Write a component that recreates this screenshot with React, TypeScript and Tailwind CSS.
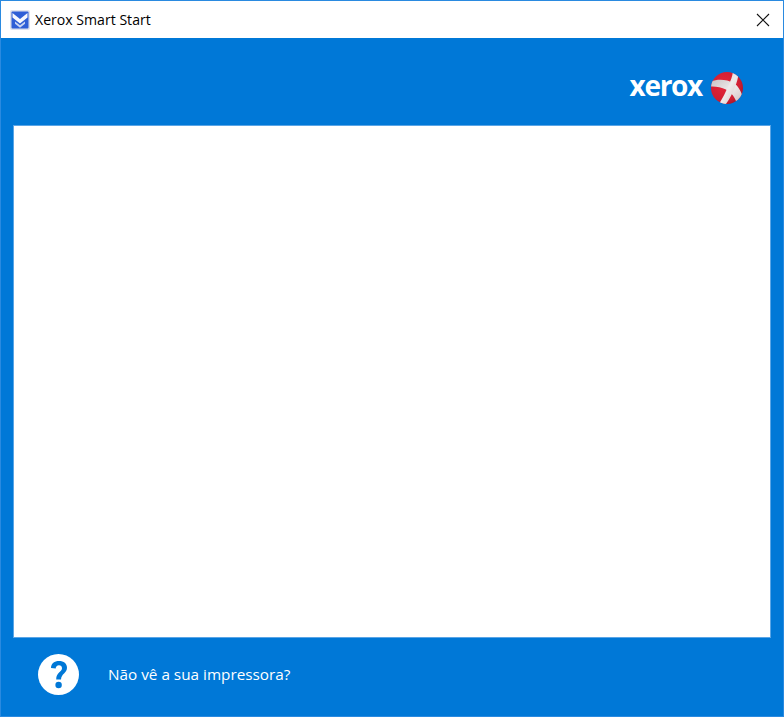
export default function App() {
  return (
    <div className="flex h-[717px] w-[784px] flex-col border border-[#2a8ae0] bg-[#0078d7] font-['Open_Sans',sans-serif]">
      <header className="flex h-[37px] items-center bg-white pl-[9px] pr-[13px]">
        <svg width="20" height="20" viewBox="0 0 20 20" className="shrink-0">
          <rect x="0" y="0" width="20" height="20" rx="2" fill="#dde1ec" />
          <rect x="1.5" y="1.5" width="17" height="17" rx="1" fill="#2f5fd6" />
          <path d="M2.5 3 L10 9 L17.5 3 L17.5 7.5 L10 13.5 L2.5 7.5 Z" fill="#f6f8fd" />
          <path d="M5 11.5 L10 15.2 L15 11.5 L15 13.7 L10 17.8 L5 13.7 Z" fill="#c9d5f2" />
        </svg>
        <span className="ml-[5px] mt-[1px] text-[14.1px] leading-none text-black">Xerox Smart Start</span>
        <svg width="14" height="14" viewBox="0 0 14 14" className="ml-auto" fill="none" stroke="#111" strokeWidth="1.1">
          <path d="M1 1 L13 13 M13 1 L1 13" />
        </svg>
      </header>
      <div className="flex h-[87px] items-start justify-end pr-[39px] pt-[33px]">
        <span className="mt-[-2px] text-[28px] font-bold leading-[32px] tracking-[-1.3px] text-white">xerox</span>
        <svg width="34" height="34" viewBox="0 0 34 34" className="ml-[8px] shrink-0">
          <defs>
            <radialGradient id="ball" cx="0.4" cy="0.4" r="0.7">
              <stop offset="0" stopColor="#e62638" />
              <stop offset="0.7" stopColor="#d01e32" />
              <stop offset="1" stopColor="#a01226" />
            </radialGradient>
            <linearGradient id="band" x1="0" y1="0" x2="1" y2="1">
              <stop offset="0" stopColor="#c8c2c2" />
              <stop offset="0.5" stopColor="#eeeaea" />
              <stop offset="1" stopColor="#d0bcbc" />
            </linearGradient>
            <clipPath id="ballClip"><circle cx="17" cy="17" r="16" /></clipPath>
          </defs>
          <circle cx="17" cy="17" r="16" fill="url(#ball)" />
          <g clipPath="url(#ballClip)">
            <path d="M0 11 C7 7.5 16 8 24 12 C29 16 32 22 33 28 L27 33 C25.5 27 22 22 16 18.5 C11 16 5 15 0 15.5 Z" fill="url(#band)" />
            <path d="M23 0 C22.5 5 21 9 18.5 14 C16 21 12.5 27 9 33 L14.5 35 C19 29 22.5 23 25 16 C27 11 28 7 28.5 3 Z" fill="url(#band)" />
          </g>
        </svg>
      </div>
      <main className="mx-3 h-[513px] border border-[#5aa5e6] bg-white" />
      <footer className="flex flex-1 items-center pl-[37px]">
        <svg width="41" height="41" viewBox="0 0 41 41" className="mt-[-5px] shrink-0">
          <circle cx="20.5" cy="20.5" r="20.5" fill="#fff" />
          <path d="M13 14 C13 9.5 16.5 7 21 7 C25.8 7 29 9.6 29 13.7 C29 19 23.3 19.5 23 25.5 L18.2 25.5 C18.2 18 24 18 24 14.2 C24 12.5 22.8 11.3 21 11.3 C19 11.3 17.8 12.6 17.7 14.6 Z" fill="#0078d7" />
          <circle cx="20.6" cy="31" r="3.2" fill="#0078d7" />
        </svg>
        <span className="ml-[29px] mt-[-4px] text-[15.3px] leading-none text-white">Não vê a sua impressora?</span>
      </footer>
    </div>
  );
}
